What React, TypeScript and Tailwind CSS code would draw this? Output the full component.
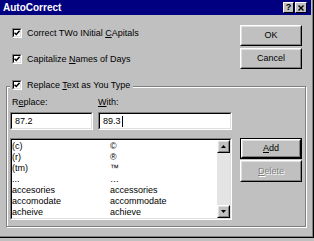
import React from 'react';

const raisedOuter = 'border border-t-white border-l-white border-r-black border-b-black';
const raisedInner = 'border border-t-[#dfdfdf] border-l-[#dfdfdf] border-r-[#808080] border-b-[#808080]';
const sunkenOuter = 'border border-t-[#808080] border-l-[#808080] border-r-white border-b-white';
const sunkenInner = 'border border-t-black border-l-black border-r-[#dfdfdf] border-b-[#dfdfdf]';

function CheckBox() {
  return (
    <span className={`flex h-[10px] w-[10px] shrink-0 ${sunkenOuter}`}>
      <span className={`flex flex-1 items-center justify-center bg-white ${sunkenInner}`}>
        <svg width="6" height="6" viewBox="0 0 7 7">
          <path d="M0.6 3.1 L2.6 5.2 L6.5 1" fill="none" stroke="black" strokeWidth="1.7" />
        </svg>
      </span>
    </span>
  );
}

function Button({
  children,
  className = '',
  isDefault = false,
  disabled = false,
}: {
  children: React.ReactNode;
  className?: string;
  isDefault?: boolean;
  disabled?: boolean;
}) {
  const face = (
    <div className={`flex flex-1 ${raisedOuter}`}>
      <div
        className={`flex flex-1 items-center justify-center ${raisedInner} ${
          disabled ? 'text-[#808080] [text-shadow:1px_1px_0_white]' : 'text-black'
        }`}
      >
        {children}
      </div>
    </div>
  );
  if (isDefault) {
    return <div className={`flex border border-black ${className}`}>{face}</div>;
  }
  return <div className={`flex ${className}`}>{face}</div>;
}

function ScrollButton({ up }: { up?: boolean }) {
  return (
    <div className={`flex h-[13px] ${raisedOuter}`}>
      <div className={`flex flex-1 items-center justify-center bg-[#c0c0c0] ${raisedInner}`}>
        <svg width="5" height="3" viewBox="0 0 5 3">
          <path d={up ? 'M0 3 L2.5 0 L5 3 Z' : 'M0 0 L5 0 L2.5 3 Z'} fill="black" />
        </svg>
      </div>
    </div>
  );
}

const entries: [string, string][] = [
  ['(c)', '©'],
  ['(r)', '®'],
  ['(tm)', '™'],
  ['...', '…'],
  ['accesories', 'accessories'],
  ['accomodate', 'accommodate'],
  ['acheive', 'achieve'],
];

export default function App() {
  return (
    <div className="h-[241px] w-[314px] overflow-hidden bg-[#c0c0c0] font-['Liberation_Sans',Arial,sans-serif] text-[9px] leading-[11px] text-black">
      <div className="flex h-[238px] w-[314px] flex-col shadow-[inset_-1px_-1px_0_black,inset_-2px_-2px_0_#808080]">
        {/* Title bar */}
        <div className="flex h-[15px] w-[311px] items-center justify-between bg-[#000080] pl-[3px] pr-[4px]">
          <span className="text-[10px] font-bold text-white">AutoCorrect</span>
          <div className="flex gap-[1px] bg-[#000080]">
            <div className={`flex h-[11px] w-[11px] bg-[#c0c0c0] ${raisedOuter}`}>
              <div className="flex flex-1 items-center justify-center pb-[1px] text-[9px] font-bold leading-none">?</div>
            </div>
            <div className={`flex h-[11px] w-[12px] bg-[#c0c0c0] ${raisedOuter}`}>
              <div className="flex flex-1 items-center justify-center">
                <svg width="6" height="6" viewBox="0 0 6 6">
                  <path d="M0.5 0.5 L5.5 5.5 M5.5 0.5 L0.5 5.5" stroke="black" strokeWidth="1.4" />
                </svg>
              </div>
            </div>
          </div>
        </div>

        {/* Top options and OK / Cancel */}
        <div className="flex h-[71px]">
          <div className="flex w-[240px] flex-col gap-[16px] pl-[12px] pt-[13px]">
            <label className="flex h-[10px] items-center gap-[5px]">
              <CheckBox />
              <span>
                Correct TWo INitial <span className="underline">C</span>Apitals
              </span>
            </label>
            <label className="flex h-[10px] items-center gap-[5px]">
              <CheckBox />
              <span>
                Capitalize <span className="underline">N</span>ames of Days
              </span>
            </label>
          </div>
          <div className="flex flex-col gap-[2px] pt-[10px]">
            <Button className="h-[21px] w-[62px]">OK</Button>
            <Button className="h-[21px] w-[62px]">Cancel</Button>
          </div>
        </div>

        {/* Replace text group */}
        <div className="ml-[6px] flex h-[141px] w-[300px] flex-col border border-[#808080] pl-[3px] shadow-[1px_1px_0_white,inset_1px_1px_0_white]">
          <label className="-mt-[7px] flex h-[10px] w-fit items-center gap-[5px] bg-[#c0c0c0] pl-[2px] pr-[3px]">
            <CheckBox />
            <span>
              Replace <span className="underline">T</span>ext as You Type
            </span>
          </label>

          <div className="mt-[7px] flex h-[11px]">
            <span className="w-[88px] pl-[2px]">
              R<span className="underline">e</span>place:
            </span>
            <span>
              <span className="underline">W</span>ith:
            </span>
          </div>

          <div className="mt-[4px] flex gap-[5px]">
            <div className={`flex h-[18px] w-[83px] ${sunkenOuter}`}>
              <div className={`flex flex-1 items-center bg-white pl-[3px] ${sunkenInner}`}>87.2</div>
            </div>
            <div className={`flex h-[18px] w-[134px] ${sunkenOuter}`}>
              <div className={`flex flex-1 items-center bg-white pl-[3px] ${sunkenInner}`}>
                89.3
                <span className="ml-[1px] h-[11px] w-[1px] bg-black" />
              </div>
            </div>
          </div>

          <div className="mt-[8px] flex gap-[8px]">
            <div className={`flex h-[82px] w-[222px] ${sunkenOuter}`}>
              <div className={`flex flex-1 overflow-hidden bg-white ${sunkenInner}`}>
                <div className="flex flex-1 flex-col overflow-hidden pt-[1px]">
                  {entries.map(([from, to]) => (
                    <div key={from} className="flex h-[11px] shrink-0 whitespace-nowrap">
                      <span className="w-[98px] shrink-0">{from}</span>
                      <span>{to}</span>
                    </div>
                  ))}
                </div>
                <div className="flex w-[13px] shrink-0 flex-col">
                  <ScrollButton up />
                  <div className="flex-1 bg-[#e4e4e4]" />
                  <ScrollButton />
                </div>
              </div>
            </div>
            <div className="flex flex-col gap-[1px]">
              <Button isDefault className="h-[21px] w-[62px]">
                <span>
                  <span className="underline">A</span>dd
                </span>
              </Button>
              <Button disabled className="h-[22px] w-[62px]">
                <span>
                  <span className="underline">D</span>elete
                </span>
              </Button>
            </div>
          </div>
        </div>
      </div>
    </div>
  );
}
